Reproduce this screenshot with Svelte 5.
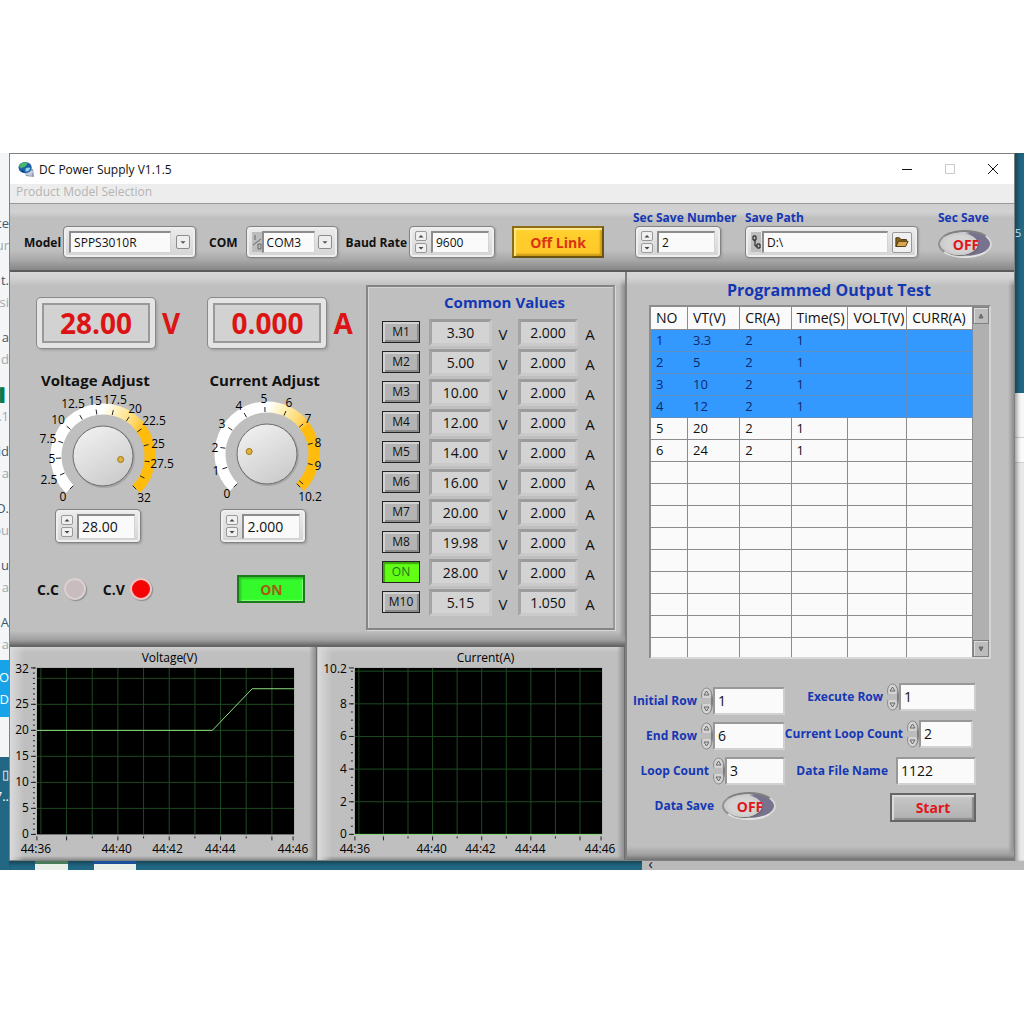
<script lang="ts">
	interface Scale {
		max: number;
		cx: number;
		cy: number;
		ticks: number[];
		labels: [string, number, number][];
	}

	interface Chart {
		title: string;
		titleX: number;
		left: number;
		max: number;
		step: number;
		minor: number;
		firstX: number;
		stepX: number;
		topLabel: string;
		times: [string, number][];
		points: [number, number][];
	}

	let voltage = $state(28);
	let current = $state(2);
	let secSave = $state(false);
	let dataSave = $state(false);

	const presets = [
		{ name: 'M1', volts: '3.30', amps: '2.000' },
		{ name: 'M2', volts: '5.00', amps: '2.000' },
		{ name: 'M3', volts: '10.00', amps: '2.000' },
		{ name: 'M4', volts: '12.00', amps: '2.000' },
		{ name: 'M5', volts: '14.00', amps: '2.000' },
		{ name: 'M6', volts: '16.00', amps: '2.000' },
		{ name: 'M7', volts: '20.00', amps: '2.000' },
		{ name: 'M8', volts: '19.98', amps: '2.000' },
		{ name: 'ON', volts: '28.00', amps: '2.000', active: true },
		{ name: 'M10', volts: '5.15', amps: '1.050' }
	];

	const columns = ['NO', 'VT(V)', 'CR(A)', 'Time(S)', 'VOLT(V)', 'CURR(A)'];
	const steps = ['3.3', '5', '10', '12', '20', '24'];
	const rows = Array.from({ length: 15 }, (_, i) =>
		i < steps.length ? [String(i + 1), steps[i], '2', '1', '', ''] : ['', '', '', '', '', '']
	);

	const voltScale: Scale = {
		max: 32,
		cx: 66,
		cy: 62,
		ticks: [0, 2.5, 5, 7.5, 10, 12.5, 15, 17.5, 20, 22.5, 25, 27.5, 30, 32],
		labels: [
			['0', 26, 107],
			['2.5', 12, 90],
			['5', 15, 69],
			['7.5', 11, 49],
			['10', 21, 30],
			['12.5', 36, 14],
			['15', 58, 11],
			['17.5', 78, 10],
			['20', 98, 19],
			['22.5', 117, 31],
			['25', 121, 54],
			['27.5', 125, 74],
			['32', 107, 108]
		]
	};

	const ampScale: Scale = {
		max: 10.2,
		cx: 66,
		cy: 60,
		ticks: [0, 1, 2, 3, 4, 5, 6, 7, 8, 9, 10, 10.2],
		labels: [
			['0', 26, 104],
			['1', 15, 81],
			['2', 14, 58],
			['3', 21, 34],
			['4', 38, 16],
			['5', 63, 9],
			['6', 88, 13],
			['7', 107, 29],
			['8', 117, 53],
			['9', 117, 76],
			['10.2', 109, 107]
		]
	};

	const charts: Chart[] = [
		{
			title: 'Voltage(V)',
			titleX: 159,
			left: 26,
			max: 32,
			step: 5,
			minor: 1,
			firstX: 30,
			stepX: 25.75,
			topLabel: '32',
			times: [['44:36', 25], ['44:40', 106], ['44:42', 157], ['44:44', 210], ['44:46', 283]],
			points: [[26, 20], [202, 20], [242, 28], [284, 28]]
		},
		{
			title: 'Current(A)',
			titleX: 167,
			left: 36,
			max: 10.2,
			step: 2,
			minor: 0.5,
			firstX: 40,
			stepX: 24.65,
			topLabel: '10.2',
			times: [['44:36', 36], ['44:40', 113], ['44:42', 162], ['44:44', 212], ['44:46', 282]],
			points: [[36, 0], [284, 0]]
		}
	];

	const behind = [
		['ste', 'ur'],
		['t.', 'si'],
		['a', 'd'],
		['▌', '.1'],
		['id', 'a'],
		['D.', 'ou'],
		['u', 'a'],
		['A', 'a']
	];

	function polar(s: Scale, value: number, r: number) {
		const a = ((135 + (270 * value) / s.max) * Math.PI) / 180;
		return [s.cx + r * Math.cos(a), s.cy + r * Math.sin(a)];
	}

	function arc(s: Scale, from: number, to: number) {
		const [x1, y1] = polar(s, from * s.max, 47);
		const [x2, y2] = polar(s, to * s.max, 47);
		return `M${x1} ${y1}A47 47 0 0 1 ${x2} ${y2}`;
	}

	function range(from: number, to: number, step: number) {
		const out: number[] = [];
		for (let v = from; v <= to + 0.001; v += step) out.push(v);
		return out;
	}

	function chartY(c: Chart, value: number) {
		return 188 - (value / c.max) * 167;
	}
</script>

{#snippet arrows()}
	<span class="arrows">
		<button type="button" aria-label="Increase"><svg viewBox="0 0 12 10"><path d="M3 6.500L6 3.500L9 6.500Z" /></svg></button>
		<button type="button" aria-label="Decrease"><svg viewBox="0 0 12 10"><path d="M3 3.500L6 6.500L9 3.500Z" /></svg></button>
	</span>
{/snippet}

{#snippet oval()}
	<svg class="oval" viewBox="0 0 12 28" aria-hidden="true">
		<path class="oval-side" d="M6 1C10 1 12 7 12 14S10 27 6 27Z" />
		<ellipse cx="5.500" cy="8" rx="5" ry="7" />
		<ellipse cx="5.500" cy="20" rx="5" ry="7" />
		<path class="oval-mid" d="M1 11H10V17H1Z" />
		<path class="oval-line" d="M3 8L5.500 4L8 8ZM3 20L5.500 24L8 20Z" />
	</svg>
{/snippet}

{#snippet gauge(id: string, s: Scale, value: number)}
	<svg class="gauge" viewBox="0 0 140 116" aria-hidden="true">
		<defs>
			<linearGradient id="{id}-warm" gradientUnits="userSpaceOnUse" x1="66" y1="15" x2="104" y2="36">
				<stop offset="0" stop-color="#fff" />
				<stop offset="0.350" stop-color="#ffefb4" />
				<stop offset="0.700" stop-color="#ffdc78" />
				<stop offset="1" stop-color="#ffc22a" />
			</linearGradient>
			<linearGradient id="{id}-knob" x1="0" y1="0" x2="0.600" y2="1">
				<stop offset="0" stop-color="#f4f4f4" />
				<stop offset="1" stop-color="#cdcdcd" />
			</linearGradient>
		</defs>
		<path class="arc" d={arc(s, 0, 0.25)} stroke="#fff" />
		<path class="arc" d={arc(s, 0.248, 0.502)} stroke="#fff" />
		<path class="arc" d={arc(s, 0.5, 0.702)} stroke="url(#{id}-warm)" />
		<path class="arc" d={arc(s, 0.7, 1)} stroke="#ffbc0c" />
		{#each s.ticks as t}
			{@const a = polar(s, t, 42)}
			{@const b = polar(s, t, 47)}
			<line x1={a[0]} y1={a[1]} x2={b[0]} y2={b[1]} stroke="#222" />
		{/each}
		<circle cx={s.cx + 1} cy={s.cy + 1} r="31" fill="#8d8d8d" opacity="0.500" />
		<circle cx={s.cx} cy={s.cy} r="30" fill="url(#{id}-knob)" stroke="#6d6d6d" />
		<circle cx={polar(s, value, 18)[0]} cy={polar(s, value, 18)[1]} r="3" fill="#e0b23c" stroke="#9b7618" />
		{#each s.labels as [text, x, y]}
			<text {x} {y}>{text}</text>
		{/each}
	</svg>
{/snippet}

<div class="desktop">
	<div class="behind-left" aria-hidden="true">
		{#each behind as [a, b]}
			<div class="mail"><span class:flag={a === '▌'}>{a}</span><span class="soft">{b}</span></div>
		{/each}
		<div class="mail-active"><span>O</span><span>ID</span></div>
		<div class="mail-end"></div>
		<div class="wall"><span>▯</span><span>7..</span></div>
	</div>

	<main class="window">
		<header class="titlebar">
			<svg class="logo" viewBox="0 0 18 18" aria-hidden="true">
				<path d="M8 16L17 17L16 9L11 6Z" fill="#8f9bb5" />
				<path d="M7 14L14 16L16 11L11 8Z" fill="#c3cbdc" />
				<ellipse cx="7.500" cy="7" rx="7" ry="6" fill="#1c5fa8" />
				<path d="M1 5Q5 0 10 2Q9 6 5 7Q3 9 1 5Z" fill="#46b86a" />
				<path d="M8 8Q12 6 13 8Q11 12 8 11Z" fill="#8fd8e8" />
				<path d="M3 10Q5 9 7 12Q4 12 3 10Z" fill="#0d3b78" />
			</svg>
			<h1>DC Power Supply V1.1.5</h1>
			<div class="controls">
				<button type="button" aria-label="Minimize"><svg viewBox="0 0 12 12"><path d="M1 6.500H11" stroke="#111" /></svg></button>
				<button type="button" aria-label="Maximize" disabled><svg viewBox="0 0 12 12"><path d="M1.500 1.500H10.500V10.500H1.500Z" stroke="#c8c8c8" /></svg></button>
				<button type="button" aria-label="Close"><svg viewBox="0 0 12 12"><path d="M1 1L11 11M11 1L1 11" stroke="#111" /></svg></button>
			</div>
		</header>
		<nav class="menubar"><button type="button" disabled>Product Model Selection</button></nav>

		<section class="toolbar">
			<div class="link-row">
				<label for="model">Model</label>
				<div class="frame model">
					<select id="model"><option>SPPS3010R</option></select>
					<svg class="drop" viewBox="0 0 14 14" aria-hidden="true"><path d="M4 6L7 9L10 6Z" /></svg>
				</div>
				<label for="com">COM</label>
				<div class="frame com">
					<svg class="io" viewBox="0 0 10 18" aria-hidden="true"><path d="M3 2V7M1 12L9 6M6 11H9V16H6Z" /></svg>
					<select id="com"><option>COM3</option></select>
					<svg class="drop" viewBox="0 0 14 14" aria-hidden="true"><path d="M4 6L7 9L10 6Z" /></svg>
				</div>
				<label for="baud">Baud Rate</label>
				<div class="frame baud">
					{@render arrows()}
					<input id="baud" type="text" value="9600" />
				</div>
				<button type="button" class="off-link">Off Link</button>
			</div>
			<div class="save-row">
				<div class="field number">
					<label for="sec-number">Sec Save Number</label>
					<div class="frame">
						{@render arrows()}
						<input id="sec-number" type="text" value="2" />
					</div>
				</div>
				<div class="field path">
					<label for="save-path">Save Path</label>
					<div class="frame">
						<svg class="io" viewBox="0 0 10 18" aria-hidden="true"><path d="M2 3H5V7H2ZM6 11H9V15H6ZM4 7V13H6" stroke="#111" /></svg>
						<input id="save-path" type="text" value="D:\" />
						<button type="button" class="browse" aria-label="Browse">
							<svg viewBox="0 0 16 14"><path d="M1 12V2H5L7 4H13V6" fill="#8a6420" stroke="#3d2a08" /><path d="M1 12L4 6H15L12 12Z" fill="#d9a84e" stroke="#3d2a08" /></svg>
						</button>
					</div>
				</div>
				<div class="field sec">
					<label for="sec-save">Sec Save</label>
					<span class="switch"><input id="sec-save" type="checkbox" bind:checked={secSave} /><span>{secSave ? 'ON' : 'OFF'}</span></span>
				</div>
			</div>
		</section>

		<div class="body">
			<div class="left">
				<section class="supply panel">
					<div class="channel">
						<div class="readout"><output>28.00</output><span>V</span></div>
						<h2>Voltage Adjust</h2>
						<div class="dial">
							{@render gauge('volt', voltScale, voltage)}
							<input type="range" aria-label="Voltage Adjust" min="0" max="32" step="0.01" bind:value={voltage} />
						</div>
						<div class="frame adjust">
							{@render arrows()}
							<input type="text" aria-label="Voltage" value={voltage.toFixed(2)} />
						</div>
						<div class="status">
							<span>C.C</span><i class="lamp"></i>
							<span class="cv">C.V</span><i class="lamp lit"></i>
						</div>
					</div>
					<div class="channel">
						<div class="readout"><output>0.000</output><span>A</span></div>
						<h2>Current Adjust</h2>
						<div class="dial">
							{@render gauge('amp', ampScale, current)}
							<input type="range" aria-label="Current Adjust" min="0" max="10.2" step="0.001" bind:value={current} />
						</div>
						<div class="frame adjust">
							{@render arrows()}
							<input type="text" aria-label="Current" value={current.toFixed(3)} />
						</div>
						<div class="status"><button type="button" class="power">ON</button></div>
					</div>
					<div class="common">
						<h2>Common Values</h2>
						{#each presets as p}
							<div class="preset">
								<button type="button" class:active={p.active}>{p.name}</button>
								<output>{p.volts}</output><span>V</span>
								<output>{p.amps}</output><span>A</span>
							</div>
						{/each}
					</div>
				</section>

				<div class="charts">
					{#each charts as c}
						<section class="chart">
							<svg viewBox="0 0 306 214" role="img" aria-label={c.title}>
								<text x={c.titleX} y="15" class="mid">{c.title}</text>
								<rect x={c.left} y="21" width={284 - c.left} height="167" />
								{#each range(c.step, c.max, c.step) as v}
									<line class="grid" x1={c.left} x2="284" y1={chartY(c, v)} y2={chartY(c, v)} />
								{/each}
								{#each range(c.firstX, 280, c.stepX) as x, i}
									<line class="grid" x1={x} x2={x} y1="21" y2="188" />
									{#if i > 0}<line class="tick" x1={x} x2={x} y1="190" y2={i % 2 ? 194 : 192} />{/if}
								{/each}
								<line class="tick" x1={c.left} x2={c.left} y1="190" y2="194" />
								<line class="tick" x1="283" x2="283" y1="190" y2="194" />
								{#each range(0, c.max, c.minor) as v}
									<line class="tick" x1={c.left - 4} x2={c.left - 2} y1={chartY(c, v)} y2={chartY(c, v)} />
								{/each}
								{#each range(0, c.max - c.step / 2, c.step) as v}
									<line class="tick" x1={c.left - 6} x2={c.left - 1} y1={chartY(c, v)} y2={chartY(c, v)} />
									<text x={c.left - 8} y={chartY(c, v) + 4} class="end">{v}</text>
								{/each}
								<line class="tick" x1={c.left - 6} x2={c.left - 1} y1="21" y2="21" />
								<text x={c.left - 8} y="26" class="end">{c.topLabel}</text>
								{#each c.times as [text, x]}
									<text {x} y="207" class="mid">{text}</text>
								{/each}
								<polyline points={c.points.map(([x, v]) => `${x},${chartY(c, v)}`).join(' ')} />
							</svg>
						</section>
					{/each}
				</div>
			</div>

			<section class="program panel">
				<h2>Programmed Output Test</h2>
				<div class="sheet">
					<table>
						<colgroup><col class="c1" /><col class="c2" /><col class="c3" /><col class="c4" /><col class="c5" /><col class="c6" /></colgroup>
						<thead>
							<tr>{#each columns as name}<th>{name}</th>{/each}</tr>
						</thead>
						<tbody>
							{#each rows as row, i}
								<tr class:selected={i < 4}>{#each row as cell}<td>{cell}</td>{/each}</tr>
							{/each}
						</tbody>
					</table>
					<div class="scroll">
						<button type="button" aria-label="Scroll up"><svg viewBox="0 0 14 14"><path d="M5 9L7 5L9 9Z" /></svg></button>
						<button type="button" aria-label="Scroll down"><svg viewBox="0 0 14 14"><path d="M5 5L7 9L9 5Z" /></svg></button>
					</div>
				</div>
				<div class="form">
					<div class="form-col first">
						<div class="line"><label for="initial">Initial Row</label>{@render oval()}<input id="initial" type="text" value="1" /></div>
						<div class="line"><label for="end">End Row</label>{@render oval()}<input id="end" type="text" value="6" /></div>
						<div class="line"><label for="loop">Loop Count</label>{@render oval()}<input id="loop" class="short" type="text" value="3" /></div>
						<div class="line toggle">
							<label for="data-save">Data Save</label>
							<span class="switch"><input id="data-save" type="checkbox" bind:checked={dataSave} /><span>{dataSave ? 'ON' : 'OFF'}</span></span>
						</div>
					</div>
					<div class="form-col second">
						<div class="line"><label for="execute">Execute Row</label>{@render oval()}<input id="execute" type="text" value="1" /></div>
						<div class="line"><label for="count">Current Loop Count</label>{@render oval()}<input id="count" class="narrow" type="text" value="2" /></div>
						<div class="line"><label for="file">Data File Name</label><input id="file" class="wide" type="text" value="1122" /></div>
						<div class="line"><button type="button" class="start">Start</button></div>
					</div>
				</div>
			</section>
		</div>
	</main>

	<div class="behind-right" aria-hidden="true"><span>5</span></div>
	<div class="behind-bottom" aria-hidden="true">
		<i class="file green"></i><i class="file blue"></i>
		<div class="bar">‹</div>
	</div>
</div>

<style>
	:global(body) {
		background: #fff;
	}

	.desktop {
		display: grid;
		grid-template-columns: 9px 1fr 9px;
		grid-template-rows: auto 9px;
		margin-top: 153px;
		overflow: hidden;
		background: #226783;
		font-family: 'Open Sans', 'Noto Sans', sans-serif;
		font-size: 12px;
		color: #111;
	}

	h1,
	h2 {
		margin: 0;
	}

	button,
	input,
	select {
		font: inherit;
		color: inherit;
		margin: 0;
		padding: 0;
		border: 0;
		border-radius: 0;
		box-sizing: border-box;
		min-width: 0;
	}

	/* whatever is open behind the window */
	.behind-left {
		grid-row: 1 / 3;
		display: flex;
		flex-direction: column;
		background: #f3f5f6;
		padding-top: 59px;
		overflow: hidden;
		font-size: 13px;
		line-height: 22px;
		color: #3f5a70;
	}

	.mail,
	.mail-active {
		display: flex;
		flex-direction: column;
		align-items: flex-end;
		height: 57px;
	}

	.soft {
		color: #a2a8ad;
	}

	.flag {
		color: #0b7a4b;
	}

	.mail-active {
		margin-top: -8px;
		padding-top: 6px;
		height: 51px;
		background: #18a2e8;
		color: #fff;
	}

	.mail-end {
		height: 40px;
	}

	.wall {
		flex: 1;
		display: flex;
		flex-direction: column;
		align-items: flex-end;
		padding-top: 6px;
		background: #226783;
		color: #fff;
	}

	.behind-right {
		background: linear-gradient(#226783 240px, #f7f7f7 240px, #f7f7f7 284px, #d0d0d0 284px, #d0d0d0 285px, #fafafa 285px, #fafafa 309px, #d0d0d0 309px, #d0d0d0 310px, #e9e9e9 310px);
		box-shadow: inset 4px 0 4px -2px rgba(0, 0, 0, 0.4);
		padding-top: 72px;
		font-size: 11px;
		color: #bfe0ec;
	}

	.behind-bottom {
		grid-column: 2 / 4;
		display: flex;
		background: #226783;
		box-shadow: inset 0 4px 4px -2px rgba(0, 0, 0, 0.4);
	}

	.file {
		width: 33px;
		margin-left: 26px;
		background: #e8efe9;
		border-top: 3px solid #4a7a5c;
		box-sizing: border-box;
	}

	.file.blue {
		width: 42px;
		border-color: #1b4f9c;
	}

	.bar {
		margin-left: auto;
		width: 37%;
		padding-left: 6px;
		background: #b9b9b9;
		font-size: 14px;
		line-height: 6px;
	}

	/* window chrome */
	.window {
		min-width: 0;
		border: 1px solid #808080;
		background: #c0c0c0;
	}

	.titlebar {
		display: flex;
		align-items: center;
		height: 30px;
		padding-left: 8px;
		background: #fff;
	}

	.logo {
		width: 17px;
		height: 17px;
	}

	h1 {
		margin-left: 4px;
		font-size: 12px;
		font-weight: 400;
	}

	.controls {
		display: flex;
		gap: 31px;
		margin-left: auto;
		padding-right: 15px;
	}

	.controls button {
		width: 12px;
		height: 12px;
		background: none;
	}

	.controls svg {
		display: block;
		fill: none;
	}

	.menubar {
		height: 20px;
		background: #ededed;
		border-bottom: 1px solid #999;
		box-sizing: border-box;
	}

	.menubar button {
		display: block;
		padding-left: 6px;
		background: none;
		color: #b4b4b4;
		line-height: 16px;
	}

	/* toolbar */
	.toolbar {
		display: grid;
		grid-template-columns: minmax(0, 615fr) minmax(0, 389fr);
		height: 68px;
		box-sizing: border-box;
		border-bottom: 2px solid #5c5c5c;
		background: linear-gradient(#cecece, #d2d2d2 8px, #bfbfbf 14px, #bfbfbf 46px, #a8a8a8 56px, #868686 66px);
	}

	.toolbar label {
		font-weight: 700;
		font-size: 12px;
		white-space: nowrap;
	}

	.link-row {
		display: flex;
		align-items: center;
		padding: 10px 0 0 14px;
	}

	.link-row .frame {
		margin-left: 2px;
	}

	.frame {
		display: flex;
		align-items: center;
		gap: 4px;
		height: 32px;
		padding: 4px 5px;
		box-sizing: border-box;
		border: 1px solid #838383;
		border-radius: 4px;
		background: linear-gradient(#ececec, #d4d4d4);
		box-shadow: inset 0 0 0 2px #efefef, 1px 1px 2px #999;
	}

	.frame input,
	.frame select {
		flex: 1;
		width: 100%;
		height: 22px;
		padding-left: 3px;
		border: 1px solid #d4d4d4;
		border-top: 2px solid #8c8c8c;
		border-left: 2px solid #8c8c8c;
		background: #fafafa;
		appearance: none;
	}

	.frame.model {
		width: 133px;
		margin-right: 13px;
		gap: 5px;
	}

	.link-row .frame.com {
		width: 92px;
		margin-left: 8px;
		margin-right: 8px;
		gap: 3px;
	}

	.frame.baud {
		width: 86px;
		margin-right: 17px;
	}

	.drop {
		flex: none;
		width: 14px;
		height: 14px;
		box-sizing: border-box;
		border: 1px solid #8c8c8c;
		border-radius: 2px;
		background: #eee;
		fill: #555;
	}

	.io {
		flex: none;
		width: 10px;
		height: 20px;
		margin-right: -3px;
		background: #bdbdbd;
		fill: none;
		stroke: #666;
	}

	.arrows {
		display: flex;
		flex: none;
		flex-direction: column;
		gap: 2px;
	}

	.arrows button {
		width: 12px;
		height: 10px;
		border: 1px solid #999;
		border-radius: 2px;
		background: #f0f0f0;
	}

	.arrows svg {
		display: block;
		fill: #444;
	}

	.off-link {
		width: 92px;
		height: 32px;
		border: 2px solid;
		border-color: #8c6d16 #6b5410 #6b5410 #8c6d16;
		background: linear-gradient(#ffd02e, #ffc928);
		box-shadow: inset 2px 2px 1px #ffe88a, inset -2px -2px 2px #c99a18;
		color: #dc3214;
		font-size: 14px;
		font-weight: 700;
	}

	.save-row {
		display: flex;
		align-items: flex-start;
		padding: 5px 0 0 8px;
	}

	.field label {
		display: block;
		color: #1437b4;
		line-height: 17px;
	}

	.field.number {
		width: 102px;
	}

	.field.number .frame {
		width: 86px;
		margin-left: 2px;
	}

	.field.path {
		width: 173px;
		margin-left: 10px;
	}

	.browse {
		flex: none;
		width: 20px;
		height: 21px;
		border: 1px solid #999;
		border-radius: 2px;
		background: #f0f0f0;
	}

	.browse svg {
		display: block;
		width: 14px;
		margin: auto;
	}

	.field.sec {
		margin-left: 20px;
	}

	.switch {
		display: block;
		position: relative;
		width: 54px;
		height: 28px;
		box-sizing: border-box;
		border: 2px solid;
		border-color: #808080 #d8d8d8 #e4e4e4 #909090;
		border-radius: 50%;
		background: linear-gradient(90deg, #cfcfcf 50%, #77728e 60%);
		text-align: center;
	}

	.switch::before {
		content: '';
		position: absolute;
		inset: 1px 12px 1px 1px;
		border-radius: 50%;
		background: radial-gradient(#d4d4d4 50%, #bcbcbc);
		box-shadow: 1px 1px 1px #666;
	}

	.switch input {
		position: absolute;
		inset: 0;
		width: 100%;
		height: 100%;
		opacity: 0;
		z-index: 1;
	}

	.switch span {
		position: relative;
		padding-left: 2px;
		color: #e0161c;
		font-size: 14px;
		font-weight: 700;
		line-height: 25px;
	}

	.sec .switch {
		margin-top: 4px;
	}

	/* body */
	.body {
		display: grid;
		grid-template-columns: minmax(0, 615fr) minmax(0, 389fr);
	}

	.left {
		min-width: 0;
	}

	.panel {
		background: linear-gradient(#d8d8d8, #d2d2d2 6px, transparent 14px), linear-gradient(0deg, #6f6f6f, #9e9e9e 5px, transparent 14px), linear-gradient(270deg, #8c8c8c, transparent 6px), #bfbfbf;
	}

	.supply {
		display: grid;
		grid-template-columns: 172fr 158fr 249px;
		height: 375px;
		padding: 13px 10px 15px 27px;
		box-sizing: border-box;
		border-bottom: 2px solid #666;
	}

	.channel {
		display: flex;
		flex-direction: column;
		min-width: 0;
		padding-top: 13px;
	}

	.readout {
		display: flex;
		align-items: center;
		gap: 7px;
		color: #dc1414;
		font-weight: 700;
	}

	.readout output {
		width: 118px;
		height: 50px;
		box-sizing: border-box;
		border: 5px solid #e4e4e4;
		border-radius: 4px;
		background: #d2d2d2;
		box-shadow: 0 0 0 1px #8a8a8a, inset 0 0 0 2px #999, 2px 2px 3px #999;
		font-size: 28px;
		line-height: 40px;
		text-align: center;
	}

	.readout span {
		font-size: 28px;
		line-height: 40px;
	}

	.channel h2 {
		margin-top: 22px;
		padding-left: 4px;
		font-size: 15px;
		line-height: 20px;
		white-space: nowrap;
	}

	.dial {
		position: relative;
		width: 140px;
		height: 116px;
		margin-top: 4px;
	}

	.channel:nth-child(2) h2 {
		padding-left: 1px;
	}

	.channel:nth-child(2) .dial {
		margin-left: -7px;
	}

	.dial input {
		position: absolute;
		inset: 32px 44px 24px 36px;
		opacity: 0;
	}

	.gauge {
		display: block;
		width: 140px;
		height: 116px;
		overflow: visible;
	}

	.gauge text {
		font-size: 12px;
		text-anchor: middle;
	}

	.arc {
		fill: none;
		stroke-width: 11;
	}

	.adjust {
		width: 86px;
		height: 34px;
		margin: -1px 0 0 18px;
		font-size: 14px;
	}

	.channel:nth-child(2) .adjust {
		margin-left: 12px;
	}

	.frame.adjust input {
		height: 25px;
	}

	.status {
		display: flex;
		align-items: center;
		height: 28px;
		margin-top: 32px;
		font-size: 14px;
		font-weight: 700;
	}

	.lamp {
		width: 18px;
		height: 18px;
		margin-left: 5px;
		border: 2px solid #dcd0d0;
		border-radius: 50%;
		background: #c8bcbe;
		box-shadow: 1px 1px 1px #8c8c8c;
	}

	.lamp.lit {
		background: #f40404;
		border-color: #f0c4c4;
	}

	.cv {
		margin-left: 17px;
	}

	.power {
		width: 68px;
		height: 28px;
		margin-left: 29px;
		border: 2px solid #1d7a1a;
		background: #34fa2c;
		box-shadow: inset 2px 2px 2px #2cc425, inset -1px -1px 1px #8cff84;
		color: #a85a14;
	}

	.common {
		display: flex;
		flex-direction: column;
		padding: 4px 12px 0 14px;
		border: 2px solid #858585;
		border-right-color: #999;
		box-shadow: inset 1px 1px 0 #d4d4d4, 1px 1px 0 #d8d8d8;
	}

	.common h2,
	.program h2 {
		color: #1437b4;
		text-align: center;
		font-size: 16px;
		line-height: 22px;
	}

	.common h2 {
		padding-left: 26px;
		margin-bottom: 4px;
		font-size: 15px;
	}

	.preset {
		display: grid;
		grid-template-columns: 38px 67px 12px 64px 14px;
		column-gap: 5px;
		align-items: center;
		height: 30px;
	}

	.preset button {
		height: 22px;
		border: 1px solid #222;
		background: #b4b4b4;
		box-shadow: inset 2px 2px 0 #d2d2d2, inset -2px -2px 0 #8c8c8c;
		font-size: 12px;
		line-height: 18px;
	}

	.preset button.active {
		background: #62fc14;
		box-shadow: inset 2px 2px 1px #3ca80c;
		color: #1d7a1a;
	}

	.preset output {
		height: 27px;
		margin-left: 4px;
		box-sizing: border-box;
		border: 3px solid;
		border-color: #9c9c9c #c8c8c8 #cacaca #a4a4a4;
		background: #d3d3d3;
		font-size: 14px;
		line-height: 21px;
		text-align: center;
	}

	.preset span {
		padding-top: 3px;
		font-size: 15px;
		line-height: 20px;
		text-align: center;
	}

	.charts {
		display: grid;
		grid-template-columns: 1fr 1fr;
		gap: 1px;
	}

	.chart {
		padding-left: 1px;
		border-right: 1px solid #6c6c6c;
		background: linear-gradient(270deg, #8f8f8f, transparent 7px), linear-gradient(90deg, #dadada, transparent 14px), linear-gradient(0deg, #8c8c8c, transparent 4px), linear-gradient(#cfcfcf, transparent 6px), #bfbfbf;
	}

	.chart svg {
		display: block;
		width: 100%;
		font-size: 12px;
	}

	.chart rect {
		fill: #000;
	}

	.chart .grid {
		stroke: #1c4a20;
	}

	.chart .tick {
		stroke: #222;
	}

	.chart polyline {
		fill: none;
		stroke: #8ee07c;
	}

	.mid {
		text-anchor: middle;
	}

	.end {
		text-anchor: end;
	}

	/* programmed output */
	.program {
		padding: 7px 23px 0 24px;
		border-left: 2px solid #808080;
	}

	.program h2 {
		padding-left: 16px;
	}

	.sheet {
		display: flex;
		height: 354px;
		margin-top: 4px;
		margin-left: -2px;
		box-sizing: border-box;
		overflow: hidden;
		border: 2px solid #8c8c8c;
		border-right-color: #d4d4d4;
		border-bottom-color: #d8d8d8;
	}

	table {
		flex: 1;
		table-layout: fixed;
		border-collapse: collapse;
		background: #fafafa;
		font-size: 13px;
	}

	.c1 {
		width: 37px;
	}

	.c2 {
		width: 53px;
	}

	.c3 {
		width: 52px;
	}

	.c4 {
		width: 57px;
	}

	.c5 {
		width: 59px;
	}

	.c6 {
		width: 66px;
	}

	th,
	td {
		height: 22px;
		padding: 0 0 0 5px;
		box-sizing: border-box;
		border-right: 1px solid #8c8c8c;
		border-bottom: 1px solid #8c8c8c;
		font-weight: 400;
		line-height: 20px;
		text-align: left;
		white-space: nowrap;
	}

	th {
		font-size: 14px;
	}

	.selected td {
		background: #3399ff;
		border-color: #5f8fc4;
		color: #0c2a6c;
	}

	.scroll {
		display: flex;
		flex: none;
		flex-direction: column;
		justify-content: space-between;
		width: 16px;
		background: #b0b0b0;
	}

	.scroll button {
		width: 16px;
		height: 17px;
		border: 1px solid #808080;
		background: #bcbcbc;
		box-shadow: inset 1px 1px 0 #dcdcdc;
	}

	.scroll svg {
		display: block;
		fill: #777;
		stroke: #666;
	}

	.form {
		display: grid;
		grid-template-columns: minmax(0, 152fr) minmax(0, 191fr);
		padding: 19px 15px 0 0;
		margin-left: -18px;
	}

	.form-col.first {
		padding-top: 5px;
	}

	.line {
		display: flex;
		align-items: center;
		justify-content: flex-end;
		height: 35px;
	}

	.second .line {
		height: 37px;
	}

	.line label {
		margin-right: 4px;
		color: #1437b4;
		font-size: 12px;
		font-weight: 700;
		white-space: nowrap;
	}

	.line input[type='text'] {
		flex: none;
		width: 72px;
		height: 28px;
		padding-left: 3px;
		border: 2px solid;
		border-color: #989898 #cfcfcf #d2d2d2 #989898;
		background: #fafafa;
		font-size: 14px;
	}

	.line input.short[type='text'] {
		width: 60px;
	}

	.second input[type='text'] {
		width: 77px;
	}

	.second input.narrow[type='text'] {
		width: 54px;
		margin-right: 3px;
	}

	.second input.wide[type='text'] {
		width: 80px;
		margin-left: 4px;
	}

	.oval {
		flex: none;
		width: 12px;
		height: 28px;
		fill: #d4d4d4;
		stroke: #8a8a8a;
	}

	.oval-side {
		fill: #7d7d7d;
		stroke: none;
	}

	.oval-mid {
		fill: #bcbcbc;
		stroke: none;
	}

	.oval-line {
		fill: none;
		stroke: #666;
	}

	.toggle {
		padding-right: 9px;
	}

	.toggle label {
		margin-right: 8px;
	}

	.start {
		width: 86px;
		height: 29px;
		border: 2px solid #666;
		background: linear-gradient(#c8c8c8, #b0b0b0);
		box-shadow: inset 2px 2px 1px #dcdcdc, inset -2px -2px 1px #8c8c8c;
		color: #e0161c;
		font-size: 14px;
		font-weight: 700;
	}
</style>
